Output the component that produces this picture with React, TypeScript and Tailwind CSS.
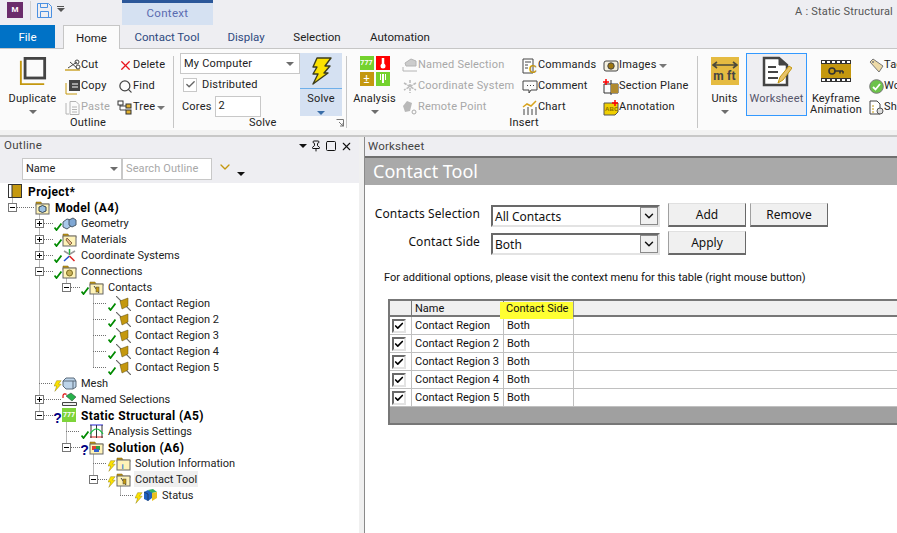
import type { ReactNode } from 'react'
import { Check, ChevronDown, Pin, Search, Square, X } from 'lucide-react'

const Caret = ({ className = 'border-t-[#6d6d6d]' }: { className?: string }) => (
  <span className={`inline-block w-0 h-0 border-x-[4px] border-x-transparent border-t-[4px] ${className}`} />
)

// ---- ribbon icons ----
const DuplicateIcon = () => (
  <svg width="28" height="28" viewBox="0 0 30 30" className="mt-[1px]">
    <path d="M2 4v25h25" fill="none" stroke="#c4980f" strokeWidth="2" />
    <rect x="6.5" y="1.5" width="21" height="21" fill="none" stroke="#444" strokeWidth="3" />
  </svg>
)
const CutIcon = () => (
  <svg width="16" height="14" viewBox="0 0 16 14">
    <path d="M0 11h15" stroke="#c4980f" strokeWidth="1.3" />
    <path d="M3 9l9-6M5 3l7 6" stroke="#444" fill="none" />
    <circle cx="12" cy="3" r="2" fill="none" stroke="#444" />
    <circle cx="13" cy="8" r="2" fill="none" stroke="#444" />
  </svg>
)
const CopyIcon = () => (
  <svg width="16" height="16" viewBox="0 0 16 16">
    <path d="M1 4v11h11" fill="none" stroke="#c4980f" />
    <rect x="4" y="1" width="11" height="11" fill="#444" />
    <path d="M7 5h6M7 8h6" stroke="#fff" />
  </svg>
)
const PasteIcon = () => (
  <svg width="16" height="16" viewBox="0 0 16 16" fill="none" stroke="#b4b4b4">
    <path d="M1 3v11h3" />
    <path d="M5 1.5h6l3 3v10H5z" />
    <path d="M7 7h5M7 9.500h5M7 12h5" />
  </svg>
)
const TreeIcon = () => (
  <svg width="16" height="15" viewBox="0 0 16 15">
    <path d="M3 4v6h6M3 6h7" fill="none" stroke="#444" />
    <rect x="1" y="1" width="5" height="4" fill="#fff" stroke="#333" />
    <rect x="9" y="4" width="5" height="4" fill="#e0b030" stroke="#333" />
    <rect x="9" y="10" width="5" height="4" fill="#e0b030" stroke="#333" />
  </svg>
)
const BoltIcon = ({ size = 28 }: { size?: number }) => (
  <svg width={size} height={size} viewBox="0 0 28 28">
    <path d="M10 1h14l-6 8h5l-6 7h4L6 27l5-10H6l4-7H6z" fill="#fce200" stroke="#3c3c1c" strokeWidth="1.4" strokeLinejoin="round" />
  </svg>
)
const AnalysisIcon = () => (
  <span className="grid grid-cols-2 gap-[2px] w-[30px] h-[30px]">
    <span className="bg-[#74d22e] flex items-center justify-center text-white text-[7px] leading-none font-bold">777</span>
    <span className="bg-[#f00] flex items-center justify-center">
      <svg width="8" height="12" viewBox="0 0 8 12"><path d="M4 1v7" stroke="#fff" strokeWidth="2.500" /><circle cx="4" cy="9" r="2.500" fill="#fff" /></svg>
    </span>
    <span className="bg-[#c4980f] flex items-center justify-center text-white text-[12px] leading-none">±</span>
    <span className="bg-[#74d22e] flex items-start justify-center gap-[1px] pt-[2px]">
      <span className="w-[1px] h-[6px] bg-white" />
      <span className="w-[2px] h-[9px] bg-white" />
      <span className="w-[1px] h-[6px] bg-white" />
    </span>
  </span>
)
const WorksheetIcon = () => (
  <svg width="30" height="31" viewBox="0 0 30 31">
    <path d="M2 2h15l8 7v20H2z" fill="#fff" stroke="#444" strokeWidth="2.500" />
    <path d="M17 2v7h8" fill="#444" stroke="#444" />
    <path d="M6 11h8M6 16h10M6 22h10" stroke="#444" strokeWidth="2" />
    <path d="M16 27l2-6 9-11 3 2-9 12z" fill="#e8c36a" stroke="#c4980f" />
  </svg>
)
const UnitsIcon = () => (
  <span className="w-[28px] h-[28px] mt-[1px] bg-[#e5bb41] flex flex-col items-center pt-[4px]">
    <svg width="26" height="8" viewBox="0 0 26 8">
      <path d="M1 4h24M5 1L1 4l4 3M21 1l4 3-4 3" fill="none" stroke="#4a4a3a" strokeWidth="1.600" />
    </svg>
    <span className="text-[#444] text-[12px] leading-[14px] font-bold whitespace-nowrap">m ft</span>
  </span>
)
const KeyframeIcon = () => (
  <svg width="30" height="22" viewBox="0 0 30 22">
    <rect width="30" height="22" fill="#333" />
    <rect y="4" width="30" height="14" fill="#c4980f" />
    {[1, 6, 11, 16, 21, 26].map((x) => (
      <g key={x}>
        <rect x={x} y="1" width="3" height="2" fill="#fff" />
        <rect x={x} y="19" width="3" height="2" fill="#fff" />
      </g>
    ))}
    <circle cx="11" cy="11" r="3" fill="none" stroke="#333" strokeWidth="1.600" />
    <path d="M14 11h8M19 11v2.500M22 11v2.500" stroke="#333" strokeWidth="1.600" />
  </svg>
)
const NamedSelIcon = () => (
  <svg width="16" height="15" viewBox="0 0 16 15" fill="none" stroke="#b4b4b4">
    <path d="M3 5l6-4 5 2v5H4z" fill="#ccc" />
    <path d="M1 9v4h14" />
  </svg>
)
const CoordIcon = () => (
  <svg width="16" height="15" viewBox="0 0 16 15" stroke="#bbb" strokeWidth="1.500">
    <path d="M8 1v13M2 4l12 7M14 4L2 11" strokeDasharray="3 1" />
  </svg>
)
const RemoteIcon = () => (
  <svg width="16" height="15" viewBox="0 0 16 15">
    <path d="M1 6l4-5 5 2-2 8-5 1z" fill="#b8b8b8" />
    <circle cx="12" cy="12" r="2" fill="none" stroke="#aaa" />
  </svg>
)
const CommandsIcon = () => (
  <svg width="16" height="16" viewBox="0 0 16 16">
    <path d="M1 1h10v14H1z" fill="#fff" stroke="#444" />
    <path d="M3 4h6M3 7h3M3 10h3" stroke="#444" />
    <text x="7" y="15" fontSize="11" fontWeight="700" fill="#c4980f" fontFamily="Liberation Sans, sans-serif">C</text>
  </svg>
)
const CommentIcon = () => (
  <svg width="16" height="15" viewBox="0 0 16 15" fill="none" stroke="#444">
    <path d="M1 2h14v9H9l-2 3v-3H1z" />
    <path d="M5 6.500h1M8 6.500h1M11 6.500h1" />
  </svg>
)
const ChartIcon = () => (
  <svg width="16" height="15" viewBox="0 0 16 15">
    <path d="M2 9v6M6 7v8M10 9v6M14 7v8" stroke="#444" />
    <path d="M1 7l4-3 4 2 5-5" fill="none" stroke="#d8a31c" strokeWidth="1.500" />
  </svg>
)
const ImagesIcon = () => (
  <svg width="16" height="13" viewBox="0 0 16 13">
    <rect x="1" y="2" width="14" height="10" rx="2" fill="#f4f0e0" stroke="#444" />
    <circle cx="8" cy="7" r="3.200" fill="#a07810" stroke="#444" />
  </svg>
)
const SectionIcon = () => (
  <svg width="16" height="16" viewBox="0 0 16 16">
    <path d="M1 5h14v9H1z" fill="none" stroke="#333" />
    <path d="M8 1v15" stroke="#333" />
    <path d="M8 5h7v9H8z" fill="#b08a2e" />
    <path d="M0 3h6M3 0v6" stroke="#f00" strokeWidth="1.500" />
  </svg>
)
const AnnotationIcon = () => (
  <svg width="16" height="16" viewBox="0 0 16 16">
    <path d="M1 3h14v9l-3 3H1z" fill="#f0cf00" stroke="#555" />
    <text x="2" y="11" fontSize="6" fontWeight="700" fill="#8a7000" fontFamily="Liberation Sans, sans-serif">ABC</text>
    <path d="M9 3h6M12 0v6" stroke="#f00" strokeWidth="1.500" />
  </svg>
)
const TagIcon = () => (
  <svg width="15" height="15" viewBox="0 0 15 15">
    <path d="M1 4l3-3 10 7-4 6z" fill="#ecd9a6" stroke="#777" />
    <circle cx="4" cy="4" r="1" fill="#777" />
  </svg>
)
const OkIcon = () => (
  <svg width="15" height="15" viewBox="0 0 15 15">
    <circle cx="7.500" cy="7.500" r="6.800" fill="#6cc24a" stroke="#777" />
    <path d="M4 8l2.500 2.500L11 5" fill="none" stroke="#fff" strokeWidth="1.800" />
  </svg>
)
const ShowIcon = () => (
  <svg width="15" height="15" viewBox="0 0 15 15">
    <path d="M1 1h7l3 3v10H1z" fill="#fff" stroke="#444" />
    <path d="M3 6h2M3 9h2M3 12h2" stroke="#c4980f" />
    <circle cx="11" cy="11" r="3" fill="#ddd" stroke="#555" />
  </svg>
)

// ---- ribbon helpers ----
const LargeButton = ({ icon, label, arrow = true, className = '' }: { icon: ReactNode; label: ReactNode; arrow?: boolean; className?: string }) => (
  <div className={`flex flex-col items-center shrink-0 ${className}`}>
    <div className="h-[33px] mt-[4px] flex items-start justify-center shrink-0">{icon}</div>
    <div className="mt-[4px] text-center leading-[12px] shrink-0">{label}</div>
    {arrow && <div className="mt-[5px] leading-none flex shrink-0"><Caret /></div>}
  </div>
)
const SmallButton = ({ icon, label, disabled, caret }: { icon: ReactNode; label: string; disabled?: boolean; caret?: boolean }) => (
  <div className={`h-[21px] flex items-center whitespace-nowrap ${disabled ? 'text-[#a8a8a8]' : ''}`}>
    <span className="w-[16px] flex justify-center shrink-0">{icon}</span>
    <span>{label}</span>
    {caret && <span className="ml-[2px] flex"><Caret className="border-t-[#777]" /></span>}
  </div>
)
const GroupSep = () => <div className="w-[1px] h-[72px] mt-[7px] bg-[#c6c6c6] shrink-0" />

const Ribbon = () => (
  <div className="h-[82px] bg-[#fbfbfb] border-t border-[#c6c6c6] flex text-[11px] text-[#222] tracking-[0.2px] shrink-0">
    <div className="w-[173px] flex flex-col shrink-0">
      <div className="flex h-[66px]">
        <LargeButton icon={<DuplicateIcon />} label="Duplicate" className="w-[65px] mt-[3px]" />
        <div className="w-[52px] mt-[6px]">
          <SmallButton icon={<CutIcon />} label="Cut" />
          <SmallButton icon={<CopyIcon />} label="Copy" />
          <SmallButton icon={<PasteIcon />} label="Paste" disabled />
        </div>
        <div className="mt-[6px]">
          <SmallButton icon={<X size={15} color="#e8141c" strokeWidth={2} />} label="Delete" />
          <SmallButton icon={<Search size={15} color="#444" strokeWidth={2} />} label="Find" />
          <SmallButton icon={<TreeIcon />} label="Tree" caret />
        </div>
      </div>
      <div className="text-center leading-[13px] mt-[1px] pl-[3px]">Outline</div>
    </div>
    <GroupSep />

    <div className="w-[172px] shrink-0 flex flex-col pl-[6px] relative">
      <div className="flex h-[67px] pt-[4px]">
        <div className="w-[120px]">
          <div className="h-[21px] bg-white border border-[#c8c8c8] flex items-center justify-between pl-[3px] pr-[5px]">
            <span className="pt-[1px]">My Computer</span>
            <Caret />
          </div>
          <div className="h-[21px] flex items-center pl-[3px] gap-[5px]">
            <span className="w-[14px] h-[14px] border border-[#c8c8c8] bg-white flex items-center justify-center">
              <Check size={11} color="#666" strokeWidth={3} />
            </span>
            <span className="pt-[2px]">Distributed</span>
          </div>
          <div className="h-[22px] flex items-center pl-[2px] gap-[3px]">
            <span className="pt-[2px]">Cores</span>
            <span className="w-[46px] h-[21px] bg-white border border-[#c8c8c8] flex items-center pl-[3px] pt-[1px]">2</span>
          </div>
        </div>
        <div className="w-[42px] h-[63px] bg-[#d5e1f2] flex flex-col items-center shrink-0">
          <div className="h-[36px] flex items-center justify-center border-b border-[#6fb0ea] w-full shrink-0"><BoltIcon /></div>
          <div className="leading-[13px] mt-[3px]">Solve</div>
          <div className="mt-[6px] flex"><Caret className="border-t-[#3a6ea8]" /></div>
        </div>
      </div>
      <div className="flex justify-between items-center pl-[69px] pr-[2px] leading-[13px]">
        <span>Solve</span>
        <svg width="8" height="8" viewBox="0 0 8 8" fill="none" stroke="#777"><path d="M0.500 0.500h7v7" /><path d="M3 3l4 4M4 7h3V4" /></svg>
      </div>
    </div>
    <GroupSep />

    <div className="w-[350px] shrink-0 flex flex-col">
      <div className="flex h-[66px]">
        <LargeButton icon={<AnalysisIcon />} label="Analysis" className="w-[55px] mt-[3px]" />
        <div className="w-[120px] mt-[6px]">
          <SmallButton icon={<NamedSelIcon />} label="Named Selection" disabled />
          <SmallButton icon={<CoordIcon />} label="Coordinate System" disabled />
          <SmallButton icon={<RemoteIcon />} label="Remote Point" disabled />
        </div>
        <div className="w-[81px] mt-[6px]">
          <SmallButton icon={<CommandsIcon />} label="Commands" />
          <SmallButton icon={<CommentIcon />} label="Comment" />
          <SmallButton icon={<ChartIcon />} label="Chart" />
        </div>
        <div className="mt-[6px]">
          <SmallButton icon={<ImagesIcon />} label="Images" caret />
          <SmallButton icon={<SectionIcon />} label="Section Plane" />
          <SmallButton icon={<AnnotationIcon />} label="Annotation" />
        </div>
      </div>
      <div className="text-center leading-[13px] mt-[1px] pl-[4px]">Insert</div>
    </div>
    <GroupSep />

    <div className="flex-1 flex">
      <LargeButton icon={<UnitsIcon />} label="Units" className="w-[43px] ml-[5px] mt-[3px]" />
      <div className="h-[63px] w-[61px] mt-[4px] bg-[#eeeef2] border border-[#3399ff] flex flex-col items-center shrink-0">
        <div className="h-[36px] pt-[2px] shrink-0"><WorksheetIcon /></div>
        <div className="leading-[13px] mt-[2px] text-[#55556a]">Worksheet</div>
      </div>
      <LargeButton
        icon={<div className="mt-[4px]"><KeyframeIcon /></div>}
        label={<>Keyframe<br />Animation</>}
        arrow={false}
        className="w-[56px] ml-[1px] mt-[3px] [&>div:nth-child(2)]:leading-[11px]"
      />
      <div className="mt-[6px] ml-[4px]">
        <SmallButton icon={<TagIcon />} label="Tags" />
        <SmallButton icon={<OkIcon />} label="Worksheet" />
        <SmallButton icon={<ShowIcon />} label="Show" />
      </div>
    </div>
  </div>
)

const Tab = ({ label, className = '' }: { label: string; className?: string }) => (
  <div className={`h-[23px] pt-[3px] flex items-center justify-center ${className}`}>{label}</div>
)

// ---- tree ----
type Status = 'check' | 'bolt' | 'question'
type Glyph = 'project' | 'model' | 'geometry' | 'materials' | 'coord' | 'connections' | 'folderContact' | 'region' | 'mesh' | 'named' | 'static' | 'settings' | 'solution' | 'info' | 'status'

interface TreeRow {
  label: string
  pad: string
  glyph: Glyph
  toggle?: '+' | '-'
  status?: Status
  bold?: boolean
  selected?: boolean
}

const rows: TreeRow[] = [
  { label: 'Project*', pad: 'pl-[8px]', glyph: 'project', bold: true },
  { label: 'Model (A4)', pad: 'pl-[8px]', glyph: 'model', toggle: '-', bold: true },
  { label: 'Geometry', pad: 'pl-[35px]', glyph: 'geometry', toggle: '+', status: 'check' },
  { label: 'Materials', pad: 'pl-[35px]', glyph: 'materials', toggle: '+', status: 'check' },
  { label: 'Coordinate Systems', pad: 'pl-[35px]', glyph: 'coord', toggle: '+', status: 'check' },
  { label: 'Connections', pad: 'pl-[35px]', glyph: 'connections', toggle: '-', status: 'check' },
  { label: 'Contacts', pad: 'pl-[62px]', glyph: 'folderContact', toggle: '-', status: 'check' },
  { label: 'Contact Region', pad: 'pl-[89px]', glyph: 'region', status: 'check' },
  { label: 'Contact Region 2', pad: 'pl-[89px]', glyph: 'region', status: 'check' },
  { label: 'Contact Region 3', pad: 'pl-[89px]', glyph: 'region', status: 'check' },
  { label: 'Contact Region 4', pad: 'pl-[89px]', glyph: 'region', status: 'check' },
  { label: 'Contact Region 5', pad: 'pl-[89px]', glyph: 'region', status: 'check' },
  { label: 'Mesh', pad: 'pl-[35px]', glyph: 'mesh', status: 'bolt' },
  { label: 'Named Selections', pad: 'pl-[35px]', glyph: 'named', toggle: '+' },
  { label: 'Static Structural (A5)', pad: 'pl-[35px]', glyph: 'static', toggle: '-', status: 'question', bold: true },
  { label: 'Analysis Settings', pad: 'pl-[62px]', glyph: 'settings', status: 'check' },
  { label: 'Solution (A6)', pad: 'pl-[62px]', glyph: 'solution', toggle: '-', status: 'question', bold: true },
  { label: 'Solution Information', pad: 'pl-[89px]', glyph: 'info', status: 'bolt' },
  { label: 'Contact Tool', pad: 'pl-[89px]', glyph: 'folderContact', toggle: '-', status: 'bolt', selected: true },
  { label: 'Status', pad: 'pl-[116px]', glyph: 'status', status: 'bolt' },
]

const StatusMark = ({ status }: { status?: Status }) => {
  if (status === 'check')
    return (
      <svg width="8" height="8" viewBox="0 0 8 8" className="mt-[8px]">
        <path d="M0.500 4.500l2 2.500L7.500 0.500" fill="none" stroke="#008a00" strokeWidth="1.800" />
      </svg>
    )
  if (status === 'bolt')
    return (
      <svg width="8" height="12" viewBox="0 0 9 12" className="mt-[5px]">
        <path d="M3 0h5L5 4h3L1 12l2-6H0z" fill="#fce200" stroke="#8a7a10" strokeWidth="0.500" />
      </svg>
    )
  if (status === 'question')
    return <span className="text-[14px] font-bold leading-none text-[#000080] mt-[4px] font-['Liberation_Sans',sans-serif]">?</span>
  return null
}

const Folder = ({ children }: { children?: ReactNode }) => (
  <svg width="15" height="15" viewBox="0 0 15 15">
    <path d="M1 2h5l1 2h7v2H1z" fill="#c4980f" stroke="#7a5f10" strokeWidth="0.500" />
    <rect x="1" y="4" width="13" height="10" fill="#fff3b8" stroke="#666" />
    {children}
  </svg>
)

const TreeGlyph = ({ glyph }: { glyph: Glyph }) => {
  switch (glyph) {
    case 'project':
      return (
        <svg width="14" height="14" viewBox="0 0 14 14">
          <rect x="0.500" y="0.500" width="4" height="13" fill="#fff" stroke="#333" />
          <rect x="4" y="0.500" width="9.500" height="13" fill="#c4980f" stroke="#333" />
        </svg>
      )
    case 'model':
      return <Folder><path d="M4 7l3.500-1.500L11 7v4l-3.500 1.500L4 11z" fill="#9cc0e0" stroke="#345" /></Folder>
    case 'geometry':
      return (
        <svg width="15" height="13" viewBox="0 0 15 13">
          <path d="M1 5l4-3 4 1v6l-4 3-4-2z" fill="#a9c8ea" stroke="#4a5a6a" />
          <path d="M7 3l4-2 3 2v5l-4 2-3-2z" fill="#7fa7d4" stroke="#4a5a6a" />
        </svg>
      )
    case 'materials':
      return <Folder><path d="M5 6l5 5-2 2-4-5z" fill="#e8b890" stroke="#8a6a40" /></Folder>
    case 'coord':
      return (
        <svg width="15" height="15" viewBox="0 0 15 15" strokeWidth="1.500">
          <path d="M7.500 7V1" stroke="#20b040" />
          <path d="M7.500 8L2 13" stroke="#2050d0" />
          <path d="M7.500 8l5 5" stroke="#e02020" />
          <path d="M7 6L2 3M8 6l5-3" stroke="#999" />
        </svg>
      )
    case 'connections':
      return <Folder><circle cx="7.500" cy="9" r="3" fill="#c9b25a" stroke="#7a6a20" /></Folder>
    case 'folderContact':
      return <Folder><path d="M5 6l5 7" stroke="#444" /><rect x="7" y="7" width="3" height="5" fill="#c4980f" stroke="#444" strokeWidth="0.500" /></Folder>
    case 'region':
      return (
        <svg width="15" height="15" viewBox="0 0 15 15">
          <path d="M0 0l15 15" stroke="#666" strokeWidth="1.200" />
          <path d="M4 5l8-3v8l-6 3z" fill="#c4980f" stroke="#5a4a10" strokeWidth="0.500" />
        </svg>
      )
    case 'mesh':
      return (
        <svg width="15" height="13" viewBox="0 0 15 13">
          <path d="M1 4l3-3h8l2 3v6l-3 2H4L1 9z" fill="#bcd4ea" stroke="#5a6a7a" />
          <path d="M1 4h10l3-0M11 4v8" stroke="#5a6a7a" fill="none" />
        </svg>
      )
    case 'named':
      return (
        <svg width="15" height="15" viewBox="0 0 15 15">
          <path d="M1 6V3.500a2 2 0 0 1 3.500-1" fill="none" stroke="#e01010" strokeWidth="1.200" />
          <path d="M4 4l5-3 5 4-4 4z" fill="#26b14b" stroke="#333" strokeWidth="0.500" />
          <path d="M0.500 10.500h14v3H0.500z" fill="#eee" stroke="#444" />
        </svg>
      )
    case 'static':
      return (
        <span className="w-[14px] h-[14px] bg-[#7ed43a] flex items-center justify-center text-white text-[7px] font-bold leading-none">777</span>
      )
    case 'settings':
      return (
        <svg width="15" height="15" viewBox="0 0 15 15" fill="none">
          <path d="M1 1h13" stroke="#2020d0" />
          <path d="M1 13h13" stroke="#e02020" />
          <path d="M2 1v13M7.500 1v13M13 1v13" stroke="#333" />
          <path d="M1 10Q7.500 0 14 10" stroke="#10c040" strokeWidth="1.200" />
        </svg>
      )
    case 'solution':
      return <Folder><rect x="3" y="6" width="4" height="4" fill="#e04030" /><rect x="7" y="6" width="4" height="4" fill="#30a040" /><rect x="5" y="9" width="5" height="3" fill="#3060d0" /></Folder>
    case 'info':
      return <Folder><text x="5.500" y="13" fontSize="8" fontWeight="700" fill="#4080d0" fontFamily="Liberation Sans, sans-serif">i</text></Folder>
    case 'status':
      return (
        <svg width="15" height="13" viewBox="0 0 15 13">
          <path d="M1 3l4-2 4 2v6l-4 3-4-2z" fill="#2060c0" />
          <path d="M5 1l5-1 4 3-5 1z" fill="#30b060" />
          <path d="M9 4l5-1v6l-5 3z" fill="#e8c020" />
          <path d="M1 3l4 2v7" fill="none" stroke="#203040" strokeWidth="0.700" />
        </svg>
      )
  }
}

const Row = ({ row }: { row: TreeRow }) => (
  <div className={`h-[16px] flex items-start ${row.pad}`}>
    {row.toggle && (
      <span className="w-[9px] h-[9px] mt-[4px] border border-[#777] bg-white shrink-0 relative text-black">
        <span className="absolute left-[1px] top-[3px] w-[5px] h-[1px] bg-black" />
        {row.toggle === '+' && <span className="absolute left-[3px] top-[1px] w-[1px] h-[5px] bg-black" />}
      </span>
    )}
    {row.glyph === 'project' ? null : (
      <span className={`w-[9px] h-[16px] shrink-0 flex justify-center ${row.toggle ? 'ml-[9px]' : 'ml-[18px]'} ${row.status ? '' : 'invisible'}`}>
        <StatusMark status={row.status} />
      </span>
    )}
    <span className={`${row.bold && !row.status ? 'w-[20px]' : 'w-[19px]'} h-[16px] shrink-0 flex items-center`}>
      <TreeGlyph glyph={row.glyph} />
    </span>
    <span className={`h-[16px] leading-[18px] px-[1px] -ml-[1px] whitespace-nowrap ${row.bold ? 'font-bold text-black text-[12px] tracking-[0.4px]' : ''} ${row.selected ? 'bg-[#efefef]' : ''}`}>
      {row.label}
    </span>
  </div>
)

const TreeLines = () => {
  const y = (i: number) => 8 + 16 * i + 0.5
  const h = (i: number, a: number, b: number) => `M${a} ${y(i)}H${b}`
  const v = (x: number, a: number, b: number) => `M${x + 0.5} ${y(a)}V${y(b)}`
  const d = [
    v(12, 0, 1), h(1, 17, 34),
    v(39, 1, 14),
    h(2, 44, 53), h(3, 44, 53), h(4, 44, 53), h(5, 44, 53), h(12, 39, 53), h(13, 44, 61), h(14, 44, 53),
    v(66, 5, 6), h(6, 71, 80),
    v(93, 6, 11), h(7, 93, 107), h(8, 93, 107), h(9, 93, 107), h(10, 93, 107), h(11, 93, 107),
    v(66, 14, 16), h(15, 66, 80), h(16, 71, 80),
    v(93, 16, 18), h(17, 93, 107), h(18, 98, 107),
    v(120, 18, 19), h(19, 120, 134),
  ].join('')
  return (
    <svg className="absolute left-0 top-0" width="200" height="340">
      <path d={d} fill="none" stroke="#707070" strokeDasharray="1 1" />
    </svg>
  )
}

const Grip = () => (
  <div className="flex-1 h-[5px] mx-[5px] bg-[radial-gradient(#b8b8b8_0.6px,transparent_0.7px)] bg-[length:2px_2px]" />
)

// ---- worksheet ----
const SelectBox = ({ value }: { value: string }) => (
  <div className="w-[169px] h-[22px] bg-white border-2 border-t-[#696969] border-l-[#696969] border-b-[#e3e3e3] border-r-[#e3e3e3] flex items-center justify-between pl-[2px]">
    <span className="pt-[1px]">{value}</span>
    <span className="w-[18px] h-[18px] bg-[#f0f0f0] border border-[#8a8a8a] flex items-center justify-center">
      <ChevronDown size={14} color="#111" strokeWidth={2.500} />
    </span>
  </div>
)
const WsButton = ({ label }: { label: string }) => (
  <div className="w-[78px] h-[24px] bg-[#f0f0f0] border border-[#a0a0a0] border-t-[#e0e0e0] border-b-2 border-b-[#696969] border-r-[#696969] flex items-center justify-center">
    {label}
  </div>
)

const tableRows = ['Contact Region', 'Contact Region 2', 'Contact Region 3', 'Contact Region 4', 'Contact Region 5']

const ContactTable = () => (
  <div className="ml-[23px] mt-[13px] border-2 border-r-0 border-[#777] bg-white font-['Roboto','Liberation_Sans',sans-serif]">
    <div className="h-[16px] flex bg-[#f0f0f0] border-b-2 border-[#777] leading-[15px] text-[11px]">
      <div className="w-[22px] border-r border-[#777]" />
      <div className="w-[92px] border-r border-[#777] pl-[3px]">Name</div>
      <div className="w-[70px] border-r border-[#999]">
        <span className="block relative h-[17px] mt-[1px] -ml-[4px] pl-[6px] bg-[#ffff33] leading-[13px] whitespace-nowrap">Contact Side</span>
      </div>
    </div>
    {tableRows.map((name) => (
      <div key={name} className="h-[18px] flex border-b border-[#c0c0c0] leading-[17px] text-[11px]">
        <div className="w-[22px] pr-[3px] border-r border-[#c0c0c0] flex items-center justify-center">
          <span className="w-[14px] h-[14px] bg-white border-2 border-t-[#696969] border-l-[#696969] border-b-[#e3e3e3] border-r-[#e3e3e3] flex items-center justify-center">
            <Check size={10} color="#000" strokeWidth={4} />
          </span>
        </div>
        <div className="w-[92px] border-r border-[#c0c0c0] pl-[3px] whitespace-nowrap">{name}</div>
        <div className="w-[70px] border-r border-[#c0c0c0] pl-[3px]">Both</div>
      </div>
    ))}
    <div className="h-[16px] bg-[#a0a0a0]" />
  </div>
)

export default function App() {
  return (
    <div className="w-[897px] h-[533px] overflow-hidden bg-[#eeeef2] flex flex-col font-['Roboto','Liberation_Sans',sans-serif] text-[11px] text-[#222]">
      {/* title row */}
      <div className="h-[25px] flex items-start shrink-0 relative">
        <div className="w-[16px] h-[16px] ml-[7px] mt-[2px] bg-[#6b2d6b] text-white text-[8px] font-bold flex items-center justify-center">M</div>
        <div className="w-[1px] h-[19px] ml-[7px] mt-[1px] bg-[#d0d0d0]" />
        <svg width="15" height="15" viewBox="0 0 15 15" className="ml-[6px] mt-[3px]" fill="none" stroke="#4a90e2">
          <path d="M0.500 0.500h11l3 3v11h-14z" />
          <path d="M3.500 0.500v4h7v-4M3.500 14.500v-6h8v6" />
        </svg>
        <div className="ml-[5px] mt-[6px] flex flex-col gap-[1px]">
          <span className="w-[7px] h-[1px] bg-[#555]" />
          <Caret className="border-t-[#555]" />
        </div>
        <div className="w-[91px] h-[25px] ml-[57px] bg-[#d5e1f2] border-t-[3px] border-[#2b579a] text-[#5a6bb0] text-[11.5px] flex items-center justify-center tracking-[0.3px]">Context</div>
        <div className="ml-auto mt-[4px] pr-[4px] whitespace-nowrap text-[#555] tracking-[0.2px]">A : Static Structural</div>
      </div>

      {/* tabs */}
      <div className="h-[23px] flex items-end shrink-0 text-[11.5px]">
        <div className="w-[55px] h-[23px] pt-[2px] bg-[#0072c6] text-white flex items-center justify-center">File</div>
        <div className="w-[57px] h-[24px] ml-[8px] pt-[3px] -mb-[1px] bg-[#fbfbfb] border border-b-0 border-[#c6c6c6] flex items-center justify-center relative">Home</div>
        <Tab label="Contact Tool" className="w-[94px] text-[#2f4a80]" />
        <Tab label="Display" className="w-[64px] text-[#2f4a80]" />
        <Tab label="Selection" className="w-[78px]" />
        <Tab label="Automation" className="w-[88px]" />
      </div>

      <Ribbon />

      <div className="h-[7px] bg-[#f2f2f2] border-b-[2px] border-[#c8c8c8] shrink-0" />

      {/* panels */}
      <div className="flex-1 flex min-h-0">
        <div className="w-[359px] flex flex-col shrink-0">
          <div className="h-[18px] flex items-center pl-[4px] pr-[6px] text-[#444] text-[11.5px] tracking-[0.3px] shrink-0">
            <span>Outline</span>
            <Grip />
            <div className="flex items-center gap-[3px]">
              <Caret className="border-t-[#111]" />
              <Pin size={12} color="#111" />
              <Square size={12} color="#111" />
              <X size={13} color="#111" />
            </div>
          </div>
          <div className="h-[28px] flex items-start pt-[3px] shrink-0">
            <div className="w-[4px] h-[18px] ml-[9px] mt-[1px] bg-[radial-gradient(#b0b0b0_0.6px,transparent_0.7px)] bg-[length:2px_2px]" />
            <div className="w-[100px] h-[22px] ml-[9px] bg-white border border-[#c8c8c8] flex items-center justify-between pl-[3px] pr-[3px]">
              <span>Name</span>
              <Caret />
            </div>
            <div className="w-[90px] h-[22px] bg-white border border-[#c8c8c8] flex items-center pl-[3px] text-[#a8a8a8] tracking-[0.1px] whitespace-nowrap">Search Outline</div>
            <ChevronDown size={16} color="#c4980f" strokeWidth={2} className="ml-[5px] mt-[1px]" />
            <span className="ml-[4px] mt-[14px] flex">
              <Caret className="border-t-[#111]" />
            </span>
          </div>
          <div className="flex-1 bg-white relative">
            <TreeLines />
            <div className="relative">
              {rows.map((row) => <Row key={row.label} row={row} />)}
            </div>
          </div>
        </div>

        <div className="w-[5px] bg-[#f0f0f0] shrink-0" />

        <div className="flex-1 flex flex-col min-w-0 bg-white border-l border-[#8a8a8a] font-['Noto_Sans','Liberation_Sans',sans-serif]">
          <div className="h-[19px] bg-[#eeeef2] flex items-center pl-[3px] text-[#444] shrink-0 font-['Roboto','Liberation_Sans',sans-serif] text-[11.5px] tracking-[0.2px]">
            <span>Worksheet</span>
            <Grip />
          </div>
          <div className="h-[29px] bg-[#a9a9a9] border-t-2 border-[#6f6f6f] text-white text-[18px] flex items-center pl-[8px] shrink-0">Contact Tool</div>

          <div className="pt-[18px] text-[12px] text-[#111]">
            <div className="flex items-start">
              <div className="w-[115px] text-right pt-[2px] leading-[18px] tracking-[0.1px]">Contacts Selection</div>
              <div className="ml-[11px] mt-[2px]"><SelectBox value="All Contacts" /></div>
              <div className="ml-[8px]"><WsButton label="Add" /></div>
              <div className="ml-[4px]"><WsButton label="Remove" /></div>
            </div>
            <div className="flex items-start mt-[4px]">
              <div className="w-[115px] text-right pt-[2px] leading-[18px] tracking-[0.1px]">Contact Side</div>
              <div className="ml-[11px] mt-[2px]"><SelectBox value="Both" /></div>
              <div className="ml-[8px]"><WsButton label="Apply" /></div>
            </div>
            <div className="pl-[19px] mt-[15px] text-[11px] leading-[16px] whitespace-nowrap font-['Roboto','Liberation_Sans',sans-serif]">
              For additional options, please visit the context menu for this table (right mouse button)
            </div>
            <ContactTable />
          </div>
        </div>
      </div>
    </div>
  )
}
